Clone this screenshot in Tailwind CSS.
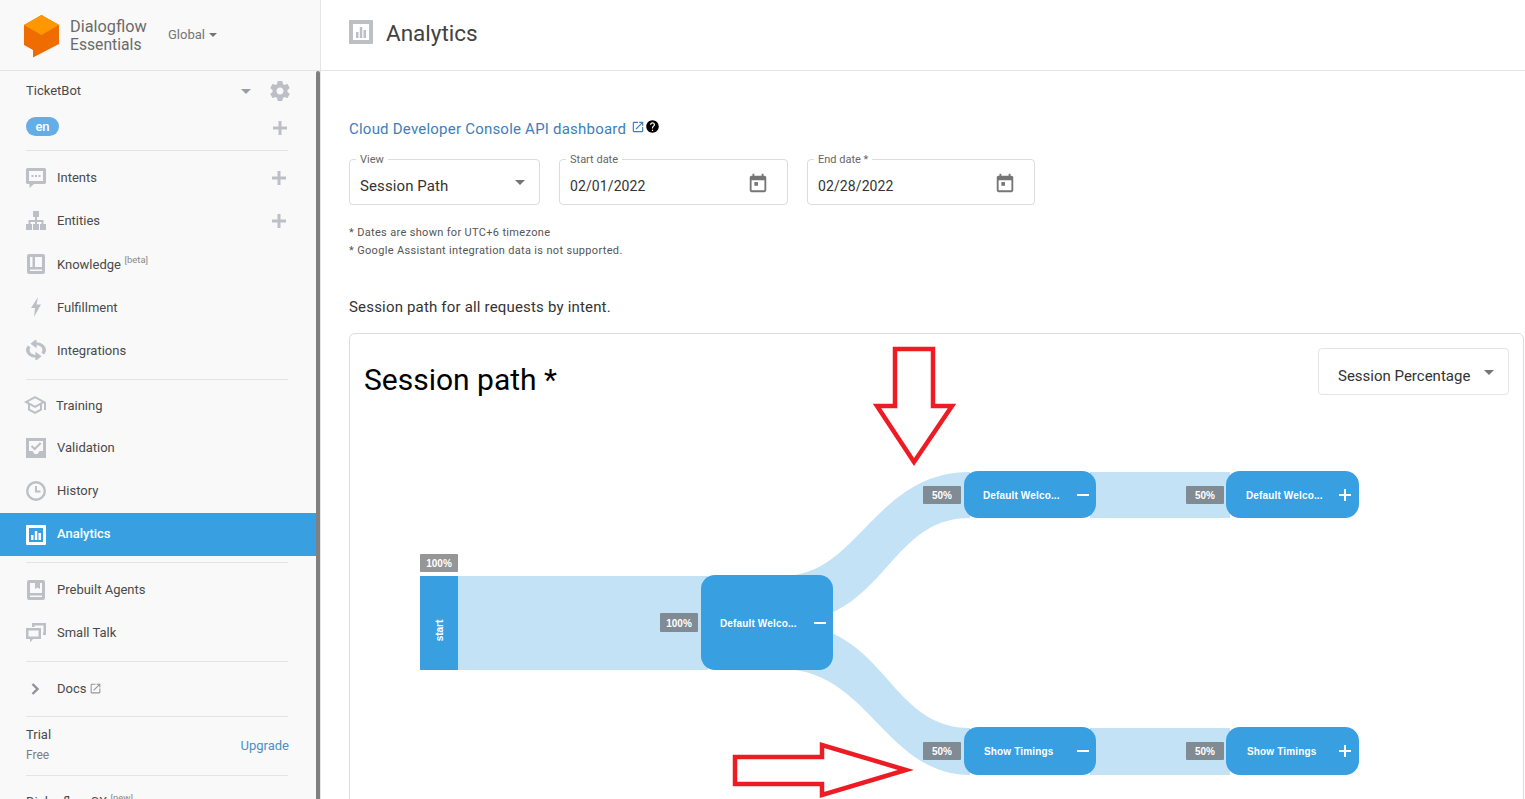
<!DOCTYPE html>
<html lang="en">
<head>
<meta charset="UTF-8">
<title>Analytics - Dialogflow Essentials</title>
<script src="https://cdn.jsdelivr.net/npm/@tailwindcss/browser@4"></script>
</head>
<body class="bg-white font-['Roboto',sans-serif] overflow-hidden">
<div class="flex h-[799px] w-[1525px] overflow-hidden">

  <!-- Sidebar -->
  <aside class="w-[321px] shrink-0 flex flex-col border-r border-[#e4e4e4] bg-[#f9f9f9]">
    <div class="h-[71px] shrink-0 flex items-center border-b border-[#e4e4e4] pl-[24px]">
      <svg class="w-[35px] h-[43px] mt-[3px]" viewBox="0 0 35 43">
        <polygon points="0,10 17.5,0 35,10 35,29 9,42.5 9,35 0,30" fill="#ef6c00"/>
        <polygon points="0,10 17.5,0 35,10 17.5,20" fill="#ff9800"/>
      </svg>
      <div class="ml-[11px] pt-[2px] w-[77px] text-[16.3px] leading-[18px] text-[#6b6b6b]">Dialogflow<br><span class="text-[15.7px]">Essentials</span></div>
      <div class="ml-[21px] flex items-center text-[13px] text-[#757575]">Global
        <svg class="w-[8px] h-[4px] ml-[4px]" viewBox="0 0 8 4"><polygon points="0,0 8,0 4,4" fill="#757575"/></svg>
      </div>
    </div>

    <div class="flex flex-1 min-h-0">
      <nav class="w-[316px] overflow-hidden text-[13px] text-[#4a4a4a]">
        <div class="h-[38px] flex items-center pl-[26px]">
          <span class="flex-1 pt-[2px]">TicketBot</span>
          <svg class="w-[10px] h-[5px] mr-[17px] mt-[3px]" viewBox="0 0 10 5"><polygon points="0,0 10,0 5,5" fill="#9a9da3"/></svg>
          <svg class="w-[24px] h-[24px] mr-[24px] mt-[2px]" viewBox="0 0 24 24" fill="#bcc0c6"><path d="M19.43 12.98c.04-.32.07-.64.07-.98s-.03-.66-.07-.98l2.11-1.65c.19-.15.24-.42.12-.64l-2-3.46c-.12-.22-.39-.3-.61-.22l-2.49 1c-.52-.4-1.08-.73-1.69-.98l-.38-2.65C14.46 2.18 14.25 2 14 2h-4c-.25 0-.46.18-.49.42l-.38 2.65c-.61.25-1.17.59-1.69.98l-2.49-1c-.23-.09-.49 0-.61.22l-2 3.46c-.13.22-.07.49.12.64l2.11 1.65c-.04.32-.07.65-.07.98s.03.66.07.98l-2.11 1.65c-.19.15-.24.42-.12.64l2 3.46c.12.22.39.3.61.22l2.49-1c.52.4 1.08.73 1.69.98l.38 2.65c.03.24.24.42.49.42h4c.25 0 .46-.18.49-.42l.38-2.65c.61-.25 1.17-.59 1.69-.98l2.49 1c.23.09.49 0 .61-.22l2-3.46c.12-.22.07-.49-.12-.64l-2.11-1.65zM12 15.5c-1.93 0-3.5-1.57-3.5-3.5s1.57-3.5 3.5-3.5 3.5 1.57 3.5 3.5-1.57 3.5-3.5 3.5z"/></svg>
        </div>
        <div class="h-[36px] flex items-center pl-[26px]">
          <span class="flex-1"><span class="inline-block w-[33px] h-[19px] rounded-full bg-[#64ade6] text-white font-medium text-center leading-[19px]">en</span></span>
          <svg class="w-[14px] h-[14px] mr-[29px] mt-[2px]" viewBox="0 0 14 14"><path d="M0 7h14M7 0v14" stroke="#bcc0c6" stroke-width="3"/></svg>
        </div>
        <div class="h-px bg-[#e4e4e4] ml-[26px] mr-[28px] mt-[5px] mb-[5px]"></div>

        <div class="h-[43px] flex items-center pl-[26px]">
          <svg class="w-[20px] h-[20px] mr-[11px]" viewBox="0 0 20 20" fill="#bcc0c6"><path fill-rule="evenodd" d="M1.500 0h17A1.500 1.500 0 0 1 20 1.500v13a1.500 1.500 0 0 1-1.500 1.500H8l-4.500 4v-4h-2A1.500 1.500 0 0 1 0 14.500v-13A1.500 1.500 0 0 1 1.500 0zM3 3v10h14V3z"/><path d="M5.500 7h2v2h-2zM9 7h2v2H9zM12.500 7h2v2h-2z"/></svg>
          <span class="flex-1">Intents</span>
          <svg class="w-[14px] h-[14px] mr-[30px]" viewBox="0 0 14 14"><path d="M0 7h14M7 0v14" stroke="#bcc0c6" stroke-width="3"/></svg>
        </div>
        <div class="h-[43px] flex items-center pl-[26px]">
          <svg class="w-[20px] h-[20px] mr-[11px]" viewBox="0 0 20 20" fill="#bcc0c6"><path d="M7 0h6v6h-2v3h6.500v4H20v6h-6v-6h1.500v-2H11v2h2v6H7v-6h2v-2H4.500v2H6v6H0v-6h2.500V9H9V6H7z"/></svg>
          <span class="flex-1">Entities</span>
          <svg class="w-[14px] h-[14px] mr-[30px]" viewBox="0 0 14 14"><path d="M0 7h14M7 0v14" stroke="#bcc0c6" stroke-width="3"/></svg>
        </div>
        <div class="h-[43px] flex items-center pl-[26px]">
          <svg class="w-[20px] h-[20px] mr-[11px]" viewBox="0 0 20 20" fill="#bcc0c6"><path fill-rule="evenodd" d="M3 0h14a2 2 0 0 1 2 2v16a2 2 0 0 1-2 2H3a2 2 0 0 1-2-2V2a2 2 0 0 1 2-2zm3.500 3H4v10h2.500zm2.500 0v10h7V3zM4 15.500V17h12v-1.500z"/></svg>
          <span class="pt-[2px]">Knowledge</span><sup class="ml-[3.5px] text-[9.5px] text-[#8a8a8a] top-[-4px]">[beta]</sup>
        </div>
        <div class="h-[43px] flex items-center pl-[26px]">
          <svg class="w-[20px] h-[20px] mr-[11px]" viewBox="0 0 20 20" fill="#bcc0c6"><polygon points="12,0 5,11 9,11 8,20 15,7.500 10.500,7.500"/></svg>
          <span class="pt-[2px]">Fulfillment</span>
        </div>
        <div class="h-[43px] flex items-center pl-[26px]">
          <svg class="w-[20px] h-[20px] mr-[11px]" viewBox="3.500 1 17 22" fill="#bcc0c6" stroke="#bcc0c6" stroke-width="1" preserveAspectRatio="none"><path d="M12 4V1L8 5l4 4V6c3.31 0 6 2.690 6 6 0 1.010-.25 1.970-.7 2.800l1.460 1.460C19.540 15.030 20 13.570 20 12c0-4.420-3.580-8-8-8zm0 14c-3.310 0-6-2.690-6-6 0-1.010.25-1.970.7-2.800L5.240 7.740C4.460 8.970 4 10.430 4 12c0 4.420 3.580 8 8 8v3l4-4-4-4v3z"/></svg>
          <span class="pt-[2px]">Integrations</span>
        </div>
        <div class="h-px bg-[#e4e4e4] ml-[26px] mr-[28px] mt-[8px] mb-[4px]"></div>

        <div class="h-[42px] flex items-center pl-[23px]">
          <svg class="w-[24px] h-[24px] mr-[9px]" viewBox="0 0 24 24" fill="#bcc0c6"><path d="M12 3L1 9l4 2.180v6L12 21l7-3.820v-6l2-1.090V17h2V9L12 3zm6.820 6L12 12.720 5.180 9 12 5.280 18.820 9zM17 15.990l-5 2.730-5-2.730v-3.720L12 15l5-2.730v3.720z"/></svg>
          <span class="pt-[2px]">Training</span>
        </div>
        <div class="h-[43px] flex items-center pl-[26px]">
          <svg class="w-[20px] h-[20px] mr-[11px]" viewBox="0 0 20 20"><path fill="#bcc0c6" fill-rule="evenodd" d="M0 0h20v20H0zM3 3v10h3.500l2 3h3l2-3H17V3z"/><path d="M5.500 8l3.200 3 6-6" fill="none" stroke="#bcc0c6" stroke-width="2.200"/></svg>
          <span>Validation</span>
        </div>
        <div class="h-[43px] flex items-center pl-[26px]">
          <svg class="w-[20px] h-[20px] mr-[11px]" viewBox="0 0 20 20" fill="none" stroke="#bcc0c6" stroke-width="2.400"><circle cx="10" cy="10" r="8.800"/><path d="M10 5v5.500h4.500" stroke-width="2"/></svg>
          <span>History</span>
        </div>
        <div class="h-[43px] mt-px flex items-center pl-[26px] bg-[#389fe0] text-white font-medium">
          <svg class="w-[20px] h-[20px] mr-[11px]" viewBox="0 0 20 20"><path fill="#fff" fill-rule="evenodd" d="M1 0h18a1 1 0 0 1 1 1v18a1 1 0 0 1-1 1H1a1 1 0 0 1-1-1V1a1 1 0 0 1 1-1zm2 3v14h14V3z"/><path fill="#fff" d="M5 10h2.500v5H5zM8.800 6h2.500v9H8.800zM12.500 8H15v7h-2.500z"/></svg>
          <span class="pb-[2px]">Analytics</span>
        </div>
        <div class="h-px bg-[#e4e4e4] ml-[26px] mr-[28px] mt-[6px] mb-[5px]"></div>

        <div class="h-[43px] flex items-center pl-[26px]">
          <svg class="w-[20px] h-[20px] mr-[11px]" viewBox="0 0 20 20" fill="#bcc0c6"><path fill-rule="evenodd" d="M3 0h14a2 2 0 0 1 2 2v16a2 2 0 0 1-2 2H3a2 2 0 0 1-2-2V2a2 2 0 0 1 2-2zm1 3v10h12V3h-2v6l-2.500-1.500L9 9V3zM4 15.500V17h12v-1.500z"/></svg>
          <span>Prebuilt Agents</span>
        </div>
        <div class="h-[43px] flex items-center pl-[26px]">
          <svg class="w-[20px] h-[20px] mr-[11px]" viewBox="0 0 20 20" fill="#bcc0c6"><path fill-rule="evenodd" d="M6 0h14v12h-3V9.500h.500V2.500h-9V4H6zM0 5h15v11H7l-3 3.500V16H0zm2.500 2.500v6h10v-6z"/></svg>
          <span>Small Talk</span>
        </div>
        <div class="h-px bg-[#e4e4e4] ml-[26px] mr-[28px] mt-[7px]"></div>

        <div class="h-[54px] flex items-center pl-[26px]">
          <svg class="w-[20px] h-[14px] mr-[11px]" viewBox="0 0 20 14" fill="none" stroke="#8f9297" stroke-width="2.400"><path d="M6.500 2l5 5-5 5"/></svg>
          <span>Docs</span>
          <svg class="w-[13px] h-[13px] ml-[3px] mb-[2px]" viewBox="0 0 24 24" fill="#94979c"><path d="M19 19H5V5h7V3H5c-1.110 0-2 .9-2 2v14c0 1.100.89 2 2 2h14c1.100 0 2-.9 2-2v-7h-2v7zM14 3v2h3.590l-9.830 9.830 1.410 1.410L19 6.410V10h2V3h-7z"/></svg>
        </div>
        <div class="h-px bg-[#e4e4e4] ml-[26px] mr-[28px]"></div>

        <div class="h-[58px] flex items-center justify-between pl-[26px] pr-[27px]">
          <div class="pb-[3px]">
            <div class="leading-[20px]">Trial</div>
            <div class="text-[12px] leading-[20px] text-[#7d7d7d]">Free</div>
          </div>
          <span class="text-[#4a90c9]">Upgrade</span>
        </div>
        <div class="h-px bg-[#e4e4e4] ml-[26px] mr-[28px]"></div>

        <div class="pl-[26px] mt-[16px] flex items-center">
          <span>Dialogflow CX</span><sup class="ml-[3.5px] text-[9.5px] text-[#8a8a8a] top-[-4px]">[new]</sup>
        </div>
      </nav>
      <div class="w-[4px] rounded-t-[3px] bg-[#808080]"></div>
    </div>
  </aside>

  <!-- Main -->
  <div class="flex-1 min-w-0 flex flex-col overflow-hidden">
    <header class="h-[71px] shrink-0 flex items-center border-b border-[#e4e4e4] pl-[28px]">
      <svg class="w-[24px] h-[24px] mr-[13px] mb-[7px]" viewBox="0 0 24 24"><path fill="#bcc0c6" fill-rule="evenodd" d="M1 0h22a1 1 0 0 1 1 1v22a1 1 0 0 1-1 1H1a1 1 0 0 1-1-1V1a1 1 0 0 1 1-1zm3 4v16h16V4z"/><path fill="#bcc0c6" d="M7 12h2.500v6H7zM10.800 7h2.500v11h-2.500zM14.500 10H17v8h-2.500z"/></svg>
      <h1 class="text-[22.5px] text-[#424242] mb-[3px]">Analytics</h1>
    </header>

    <main class="pl-[28px]">
      <div class="mt-[45px] h-[24px] flex items-center text-[15px] tracking-[0.22px] text-[#3d7ebb]">
        <span class="pt-[2px]">Cloud Developer Console API dashboard</span>
        <svg class="w-[14px] h-[14px] ml-[5px] mb-[3px]" viewBox="0 0 24 24" fill="#3d7ebb"><path d="M19 19H5V5h7V3H5c-1.110 0-2 .9-2 2v14c0 1.100.89 2 2 2h14c1.100 0 2-.9 2-2v-7h-2v7zM14 3v2h3.590l-9.830 9.830 1.410 1.410L19 6.410V10h2V3h-7z"/></svg>
        <svg class="w-[15px] h-[15px] mb-[3px]" viewBox="0 0 24 24" fill="#000"><path d="M12 2C6.480 2 2 6.480 2 12s4.480 10 10 10 10-4.480 10-10S17.520 2 12 2zm1 17h-2v-2h2v2zm2.070-7.750l-.9.920C13.450 12.900 13 13.500 13 15h-2v-.5c0-1.100.45-2.100 1.170-2.830l1.240-1.260c.37-.36.59-.86.59-1.410 0-1.100-.9-2-2-2s-2 .9-2 2H8c0-2.210 1.790-4 4-4s4 1.790 4 4c0 .88-.36 1.680-.93 2.250z"/></svg>
      </div>

      <div class="mt-[19px] flex gap-[19px] text-[15px] text-[#333]">
        <div class="relative w-[191px] h-[46px] rounded-[4px] border border-[#dcdcdc] flex items-center pl-[10px] pt-[8px]">
          <span class="absolute left-[6px] top-[-8px] px-[4px] bg-white text-[11px] text-[#666]">View</span>
          <span class="flex-1 tracking-[0.1px]">Session Path</span>
          <svg class="w-[10px] h-[5px] mr-[14px] mb-[7px]" viewBox="0 0 10 5"><polygon points="0,0 10,0 5,5" fill="#757575"/></svg>
        </div>
        <div class="relative w-[229px] h-[46px] rounded-[4px] border border-[#dcdcdc] flex items-center pl-[10px] pt-[8px]">
          <span class="absolute left-[6px] top-[-8px] px-[4px] bg-white text-[11px] text-[#666]">Start date</span>
          <span class="flex-1 text-[14px] tracking-[0.1px]">02/01/2022</span>
          <svg class="w-[22px] h-[22px] mr-[18px] mb-[6px]" viewBox="0 0 24 24" fill="#757575"><path d="M19 4h-1V2h-2v2H8V2H6v2H5c-1.100 0-2 .9-2 2v14c0 1.100.9 2 2 2h14c1.100 0 2-.9 2-2V6c0-1.100-.9-2-2-2zm0 16H5V9h14v11z"/><path d="M8 11h4v4H8z"/></svg>
        </div>
        <div class="relative w-[228px] h-[46px] rounded-[4px] border border-[#dcdcdc] flex items-center pl-[10px] pt-[8px]">
          <span class="absolute left-[6px] top-[-8px] px-[4px] bg-white text-[11px] text-[#666]">End date *</span>
          <span class="flex-1 text-[14px] tracking-[0.1px]">02/28/2022</span>
          <svg class="w-[22px] h-[22px] mr-[18px] mb-[6px]" viewBox="0 0 24 24" fill="#757575"><path d="M19 4h-1V2h-2v2H8V2H6v2H5c-1.100 0-2 .9-2 2v14c0 1.100.9 2 2 2h14c1.100 0 2-.9 2-2V6c0-1.100-.9-2-2-2zm0 16H5V9h14v11z"/><path d="M8 11h4v4H8z"/></svg>
        </div>
      </div>

      <div class="mt-[19px] text-[11px] leading-[18px] tracking-[0.33px] text-[#555]">
        <p>* Dates are shown for UTC+6 timezone</p>
        <p>* Google Assistant integration data is not supported.</p>
      </div>

      <p class="mt-[37px] h-[20px] leading-[20px] text-[15px] tracking-[0.18px] text-[#333]">Session path for all requests by intent.</p>

      <!-- Session path card -->
      <section class="relative mt-[16px] w-[1175px] h-[520px] rounded-[6px] border border-[#dcdcdc]">
        <h2 class="absolute left-[14px] top-[27px] text-[30px] leading-[38px] text-black">Session path *</h2>
        <div class="absolute left-[968px] top-[14px] w-[191px] h-[47px] rounded-[4px] border border-[#e4e4e4] flex items-center pl-[19px] pt-[9px] text-[15px] text-[#333]">
          <span class="flex-1">Session Percentage</span>
          <svg class="w-[10px] h-[5px] mr-[14px] mb-[7px]" viewBox="0 0 10 5"><polygon points="0,0 10,0 5,5" fill="#757575"/></svg>
        </div>

        <!-- flows and annotation arrows, in page coordinates -->
        <svg class="absolute left-0 top-0 w-[1175px] h-[520px]" viewBox="350 334 1175 520">
          <g fill="#c3e2f6">
            <rect x="458" y="576" width="250" height="94"/>
            <path d="M795 575C860 565 880 472 970 472L970 518C900 518 890 590 825 616Z"/>
            <path d="M825 630C890 655 900 728 970 728L970 775C890 775 870 680 795 670Z"/>
            <rect x="1090" y="472" width="140" height="46"/>
            <rect x="1090" y="728" width="140" height="47"/>
          </g>
          <g fill="none" stroke="#ed1c24" stroke-width="4.5" stroke-linejoin="miter">
            <polygon points="895,349 933,349 933,406 952,406 914,462 877,406 895,406"/>
            <polygon points="735,757 822,757 822,745 906,770 822,795 822,784 735,784"/>
          </g>
        </svg>

        <!-- nodes -->
        <div class="absolute left-[70px] top-[220px] w-[38px] h-[18px] pt-px bg-[#969696] rounded-[1px] text-white text-[10px] font-bold text-center leading-[18px] font-['Liberation_Sans',sans-serif]">100%</div>
        <div class="absolute left-[70px] top-[242px] w-[38px] h-[94px] pl-[2px] pt-[14px] bg-[#389fe0] flex items-center justify-center">
          <span class="-rotate-90 text-white text-[10px] font-bold font-['Liberation_Sans',sans-serif]">start</span>
        </div>

        <div class="absolute left-[310px] top-[279px] w-[38px] h-[19px] pt-px bg-[#818b93] rounded-[1px] text-white text-[10px] font-bold text-center leading-[19px] font-['Liberation_Sans',sans-serif]">100%</div>
        <div class="absolute left-[351px] top-[241px] w-[132px] h-[95px] rounded-[14px] bg-[#389fe0] flex items-center pl-[19px] pr-[7px] text-white font-['Liberation_Sans',sans-serif]">
          <span class="flex-1 pt-[2px] text-[10px] font-bold tracking-[0.15px]">Default Welco...</span>
          <svg class="w-[12px] h-[12px]" viewBox="0 0 12 12"><path d="M0 6h12" stroke="#fff" stroke-width="2"/></svg>
        </div>

        <div class="absolute left-[573px] top-[152px] w-[38px] h-[18px] pt-px bg-[#818b93] rounded-[1px] text-white text-[10px] font-bold text-center leading-[18px] font-['Liberation_Sans',sans-serif]">50%</div>
        <div class="absolute left-[614px] top-[137px] w-[132px] h-[47px] rounded-[14px] bg-[#389fe0] flex items-center pl-[19px] pr-[7px] text-white font-['Liberation_Sans',sans-serif]">
          <span class="flex-1 pt-[2px] text-[10px] font-bold tracking-[0.15px]">Default Welco...</span>
          <svg class="w-[12px] h-[12px]" viewBox="0 0 12 12"><path d="M0 6h12" stroke="#fff" stroke-width="2"/></svg>
        </div>

        <div class="absolute left-[836px] top-[152px] w-[38px] h-[18px] pt-px bg-[#818b93] rounded-[1px] text-white text-[10px] font-bold text-center leading-[18px] font-['Liberation_Sans',sans-serif]">50%</div>
        <div class="absolute left-[876px] top-[137px] w-[133px] h-[47px] rounded-[14px] bg-[#389fe0] flex items-center pl-[20px] pr-[8px] text-white font-['Liberation_Sans',sans-serif]">
          <span class="flex-1 pt-[2px] text-[10px] font-bold tracking-[0.15px]">Default Welco...</span>
          <svg class="w-[12px] h-[12px]" viewBox="0 0 12 12"><path d="M0 6h12M6 0v12" stroke="#fff" stroke-width="2"/></svg>
        </div>

        <div class="absolute left-[573px] top-[408px] w-[38px] h-[18px] pt-px bg-[#818b93] rounded-[1px] text-white text-[10px] font-bold text-center leading-[18px] font-['Liberation_Sans',sans-serif]">50%</div>
        <div class="absolute left-[614px] top-[393px] w-[132px] h-[48px] rounded-[14px] bg-[#389fe0] flex items-center pl-[20px] pr-[7px] text-white font-['Liberation_Sans',sans-serif]">
          <span class="flex-1 text-[10px] font-bold tracking-[0.15px]">Show Timings</span>
          <svg class="w-[12px] h-[12px]" viewBox="0 0 12 12"><path d="M0 6h12" stroke="#fff" stroke-width="2"/></svg>
        </div>

        <div class="absolute left-[836px] top-[408px] w-[38px] h-[18px] pt-px bg-[#818b93] rounded-[1px] text-white text-[10px] font-bold text-center leading-[18px] font-['Liberation_Sans',sans-serif]">50%</div>
        <div class="absolute left-[876px] top-[393px] w-[133px] h-[48px] rounded-[14px] bg-[#389fe0] flex items-center pl-[21px] pr-[8px] text-white font-['Liberation_Sans',sans-serif]">
          <span class="flex-1 text-[10px] font-bold tracking-[0.15px]">Show Timings</span>
          <svg class="w-[12px] h-[12px]" viewBox="0 0 12 12"><path d="M0 6h12M6 0v12" stroke="#fff" stroke-width="2"/></svg>
        </div>
      </section>
    </main>
  </div>
</div>
</body>
</html>
